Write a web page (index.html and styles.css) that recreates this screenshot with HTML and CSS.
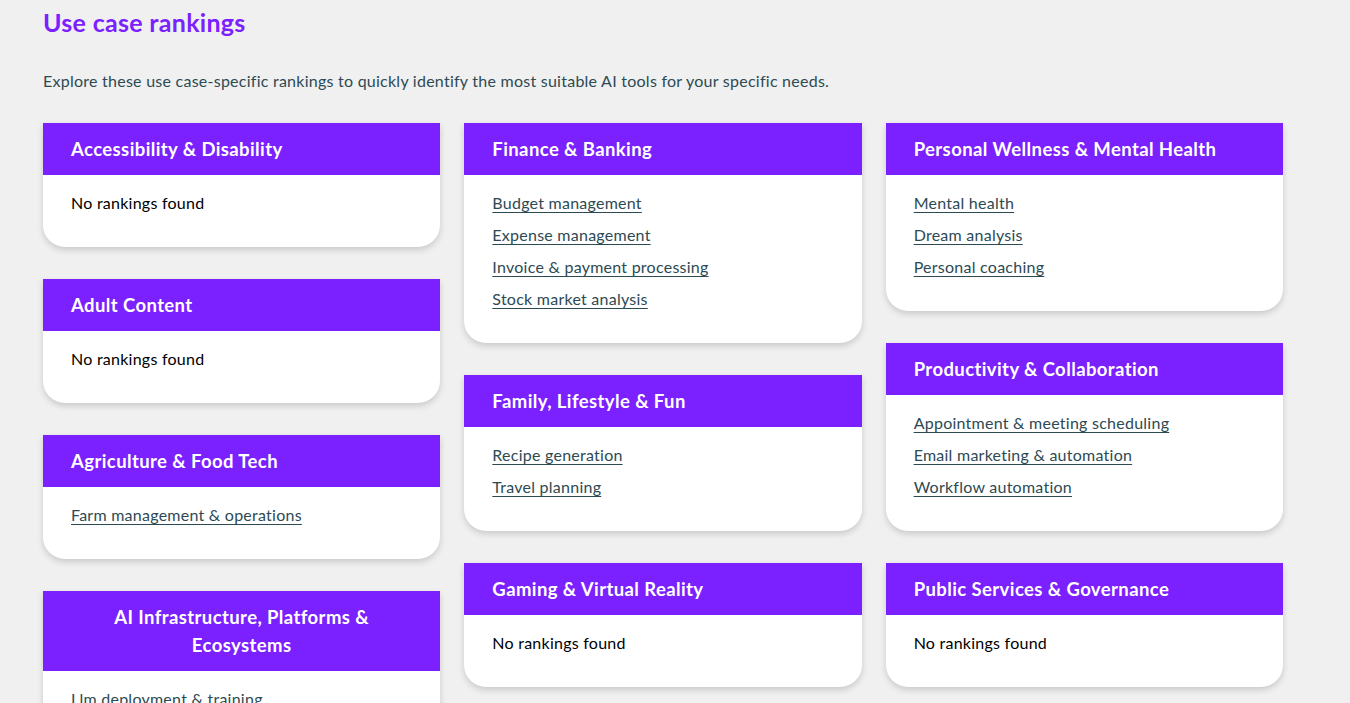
FILE: index.html
```html
<!DOCTYPE html>
<html>
<head>
<meta charset="utf-8">
<link rel="stylesheet" href="styles.css">
</head>
<body>
<main class="page">
  <h1 class="title">Use case rankings</h1>
  <p class="intro">Explore these use case-specific rankings to quickly identify the most suitable AI tools for your specific needs.</p>
  <div class="grid">
    <div class="col">
      <section class="card">
        <h2 class="card-head">Accessibility &amp; Disability</h2>
        <div class="card-body"><p class="empty">No rankings found</p></div>
      </section>
      <section class="card">
        <h2 class="card-head">Adult Content</h2>
        <div class="card-body"><p class="empty">No rankings found</p></div>
      </section>
      <section class="card">
        <h2 class="card-head">Agriculture &amp; Food Tech</h2>
        <div class="card-body"><a class="link" href="#">Farm management &amp; operations</a></div>
      </section>
      <section class="card">
        <h2 class="card-head card-head-center">AI Infrastructure, Platforms &amp; Ecosystems</h2>
        <div class="card-body">
          <a class="link" href="#">Llm deployment &amp; training</a>
        </div>
      </section>
    </div>
    <div class="col">
      <section class="card">
        <h2 class="card-head">Finance &amp; Banking</h2>
        <div class="card-body">
          <a class="link" href="#">Budget management</a>
          <a class="link" href="#">Expense management</a>
          <a class="link" href="#">Invoice &amp; payment processing</a>
          <a class="link" href="#">Stock market analysis</a>
        </div>
      </section>
      <section class="card">
        <h2 class="card-head">Family, Lifestyle &amp; Fun</h2>
        <div class="card-body">
          <a class="link" href="#">Recipe generation</a>
          <a class="link" href="#">Travel planning</a>
        </div>
      </section>
      <section class="card">
        <h2 class="card-head">Gaming &amp; Virtual Reality</h2>
        <div class="card-body"><p class="empty">No rankings found</p></div>
      </section>
    </div>
    <div class="col">
      <section class="card">
        <h2 class="card-head">Personal Wellness &amp; Mental Health</h2>
        <div class="card-body">
          <a class="link" href="#">Mental health</a>
          <a class="link" href="#">Dream analysis</a>
          <a class="link" href="#">Personal coaching</a>
        </div>
      </section>
      <section class="card">
        <h2 class="card-head">Productivity &amp; Collaboration</h2>
        <div class="card-body">
          <a class="link" href="#">Appointment &amp; meeting scheduling</a>
          <a class="link" href="#">Email marketing &amp; automation</a>
          <a class="link" href="#">Workflow automation</a>
        </div>
      </section>
      <section class="card">
        <h2 class="card-head">Public Services &amp; Governance</h2>
        <div class="card-body"><p class="empty">No rankings found</p></div>
      </section>
    </div>
  </div>
</main>
</body>
</html>
```

FILE: styles.css
```css
* { box-sizing: border-box; }
html, body { margin: 0; padding: 0; }
body {
  background: #f0f0f0;
  font-family: Lato, "Noto Sans", "Liberation Sans", sans-serif;
  color: #2d4a53;
}
.page {
  padding: 6px 43px 40px 43px;
  width: 1326px;
}
.title {
  margin: 0;
  font-size: 25px;
  line-height: 32px;
  font-weight: 700;
  letter-spacing: 0.3px;
  color: #7b20ff;
}
.intro {
  margin: 31px 0 0 0;
  font-size: 16px;
  line-height: 24px;
  letter-spacing: 0.25px;
  color: #2d4a53;
}
.grid {
  margin-top: 30px;
  width: 1240px;
  display: flex;
  gap: 24px;
  align-items: flex-start;
}
.col {
  flex: 1 1 0;
  min-width: 0;
  display: flex;
  flex-direction: column;
  gap: 32px;
}
.card {
  background: #fff;
  border-radius: 0 0 22px 22px;
  box-shadow: 0 3px 6px rgba(0,0,0,0.16);
}
.card-head {
  margin: 0;
  background: #7b20ff;
  color: #fff;
  font-size: 18.5px;
  line-height: 28px;
  font-weight: 700;
  letter-spacing: 0.4px;
  padding: 12px 28px;
}
.card-head-center { text-align: center; padding: 12px 56px; }
.card-body {
  padding: 16px 28px 32px 28px;
  display: flex;
  flex-direction: column;
  gap: 8px;
}
.empty {
  margin: 0;
  font-size: 16px;
  line-height: 24px;
  letter-spacing: 0.25px;
  color: #000;
}
.link {
  font-size: 16px;
  line-height: 24px;
  letter-spacing: 0.25px;
  color: #2d4a53;
  text-decoration: underline;
  text-underline-offset: 3px;
  align-self: flex-start;
}
```
